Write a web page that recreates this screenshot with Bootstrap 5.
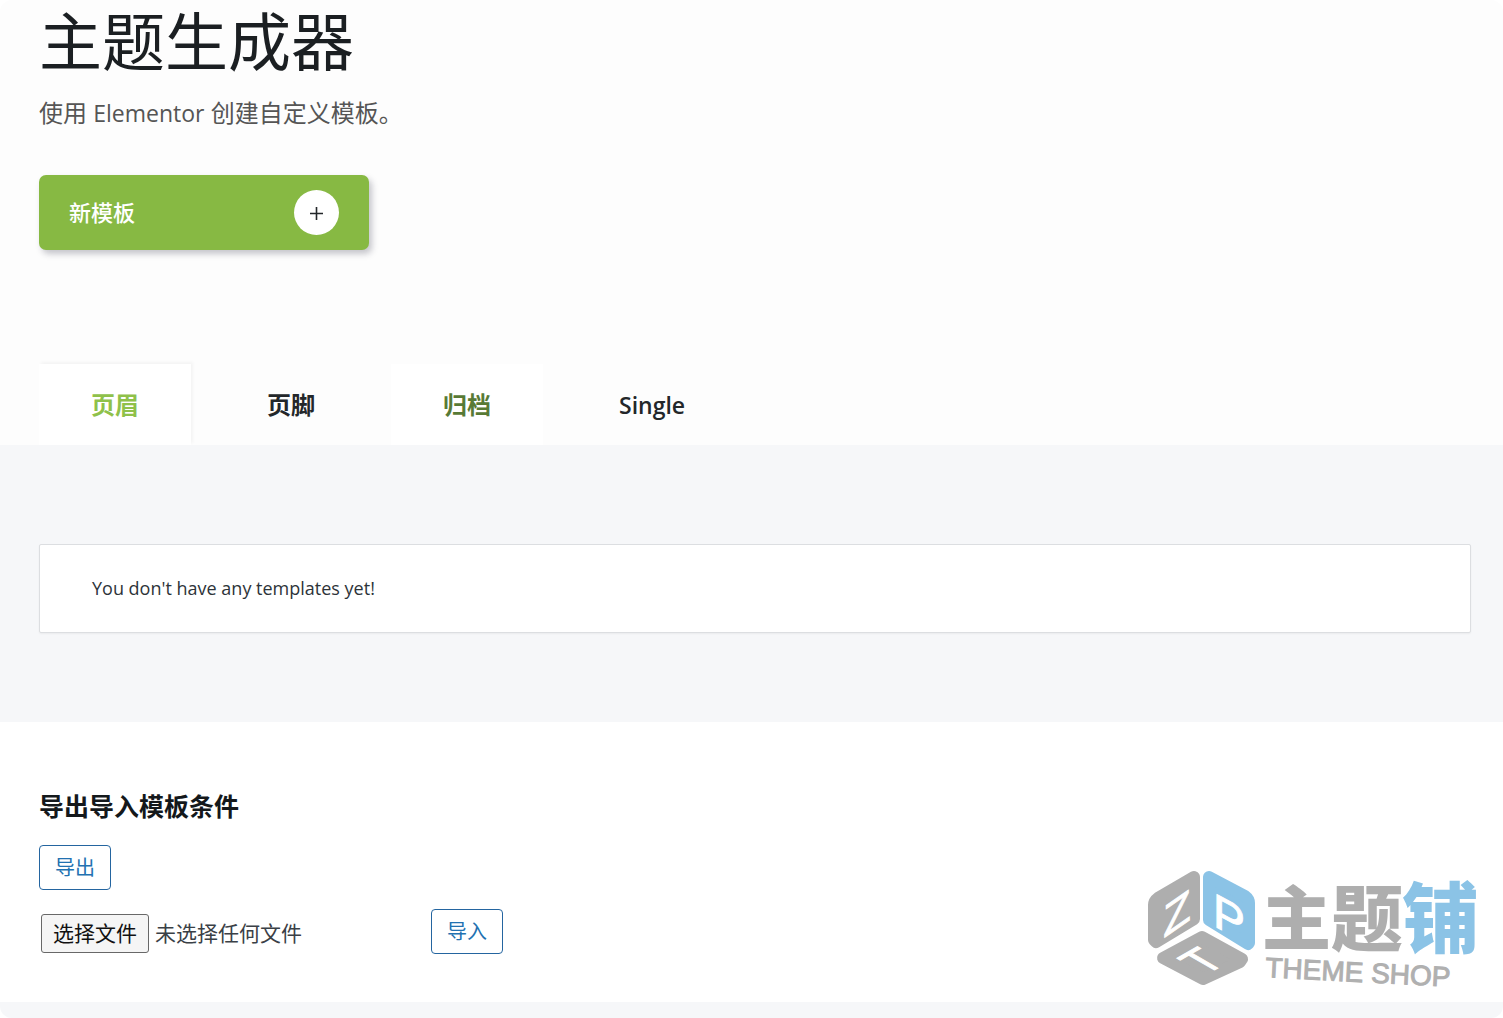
<!DOCTYPE html>
<html lang="zh-CN">
<head>
<meta charset="utf-8">
<meta name="viewport" content="width=device-width, initial-scale=1">
<title>主题生成器</title>
<link href="https://cdn.jsdelivr.net/npm/bootstrap@5.3.0/dist/css/bootstrap.min.css" rel="stylesheet">
<style>
body { font-family: "Open Sans", "Noto Sans CJK SC", sans-serif; background: #fff; color: #23282d; }
.builder-page { background: #fdfdfd; border-radius: 12px; overflow: hidden; }
.gutter { padding-left: 39px; padding-right: 32px; }
.page-title { font-size: 63px; line-height: 82px; color: #1b1f22; font-weight: 400; }
.page-intro { font-size: 24px; line-height: 36px; margin-top: 13px; color: #555; }
.page-intro span { font-size: 23px; }
.new-template { width: 330px; height: 75px; margin-top: 44px; padding: 0 30px; font-size: 22px; font-weight: 500; color: #fff; background: #87b943; border: 0; border-radius: 7px; box-shadow: 3px 4px 6px rgba(40,40,60,.26); }
.new-template:hover { color: #fff; background: #7aab38; }
.plus-disc { width: 45px; height: 45px; padding-top: 2px; background: #fff; }
.type-tabs { margin-top: 114px; gap: 24px; }
.type-tabs a { padding: 22px 52px; line-height: 37px; font-size: 24px; font-weight: 700; color: #23272a; text-decoration: none; }
.type-tabs .latin-tab { padding-top: 23px; padding-bottom: 21px; font-size: 23px; font-weight: 600; }
.type-tabs .current { color: #8fc14a; background: #fff; box-shadow: 2px -2px 3px rgba(0,0,0,.04); }
.type-tabs .hovered { color: #587a35; background: #fff; }
.templates-band { background: #f6f7f9; padding-top: 99px; padding-bottom: 89px; }
.empty-notice { padding: 29px 52px; font-size: 18px; line-height: 29px; color: #2d3339; background: #fff; border: 1px solid #dcdee1; border-radius: 2px; box-shadow: 0 1px 2px rgba(0,0,0,.05); }
.conditions { background: #fff; padding: 66px 23px 12px 39px; }
.conditions h2 { font-size: 25px; line-height: 36px; margin-bottom: 21px; font-weight: 700; color: #14181b; }
.condition-tools { padding-bottom: 36px; }
.line-button { height: 45px; padding: 0 15px; font-size: 20px; line-height: 43px; color: #2271b1; background: #fff; border: 1px solid #2465a0; border-radius: 4px; }
.line-button:hover { color: #0a4b78; border-color: #0a4b78; background: #f6f7f7; }
.import-form { width: 464px; margin-top: 19px; }
.file-picker { font-size: 21px; gap: 6px; margin: 5px 0 0 2px; cursor: pointer; color: #3a4046; }
.picker-button { height: 39px; padding: 0 11px; line-height: 37px; border: 1px solid #686868; border-radius: 3px; background: #f5f5f5; color: #111; }
.site-mark { width: 334px; height: 126px; }
.page-end { height: 16px; background: #f6f7f9; }
</style>
<script src="https://cdn.jsdelivr.net/npm/bootstrap@5.3.0/dist/js/bootstrap.bundle.min.js"></script>
</head>
<body>
<div class="builder-page">
  <header class="gutter">
    <h1 class="page-title mb-0">主题生成器</h1>
    <p class="page-intro mb-0">使用 <span>Elementor</span> 创建自定义模板。</p>
    <button type="button" class="new-template btn d-flex align-items-center justify-content-between">
      新模板
      <span class="plus-disc rounded-circle d-flex align-items-center justify-content-center">
        <svg width="13" height="13" viewBox="0 0 13 13" aria-hidden="true"><path d="M6.5 0v13M0 6.5h13" stroke="#23272a" stroke-width="1.6"/></svg>
      </span>
    </button>
    <nav class="type-tabs d-flex" aria-label="模板类型">
      <a href="#" class="current" aria-current="page">页眉</a>
      <a href="#">页脚</a>
      <a href="#" class="hovered">归档</a>
      <a href="#" class="latin-tab">Single</a>
    </nav>
  </header>

  <main>
    <section class="templates-band gutter">
      <div class="empty-notice">You don't have any templates yet!</div>
    </section>

    <section class="conditions d-flex justify-content-between align-items-end">
      <div class="condition-tools">
        <h2>导出导入模板条件</h2>
        <button type="button" class="line-button btn d-block">导出</button>
        <form class="import-form d-flex justify-content-between align-items-start">
          <input type="file" id="conditionsFile" class="visually-hidden">
          <label for="conditionsFile" class="file-picker d-flex align-items-center">
            <span class="picker-button">选择文件</span><span>未选择任何文件</span>
          </label>
          <button type="button" class="line-button btn">导入</button>
        </form>
      </div>
      <svg class="site-mark" viewBox="1146 864 334 126" role="img" aria-label="主题铺 THEME SHOP">
        <g stroke-linejoin="round" stroke-width="12">
          <path d="M1194 877L1194 919L1156 942L1154 940V905Q1154 901 1158 898Z" fill="#aeaeae" stroke="#aeaeae"/>
          <path d="M1209 877L1245 896Q1249 899 1249 903V943L1248 944L1209 920Z" fill="#8bc3e6" stroke="#8bc3e6"/>
          <path d="M1202 937L1242 959L1240 962L1203 979L1163 958Z" fill="#aeaeae" stroke="#aeaeae"/>
        </g>
        <g fill="#fff" stroke="#fff" stroke-width="1" font-family="Liberation Sans, sans-serif" text-anchor="middle">
          <text transform="translate(1177 929) skewY(-35)" font-size="45">Z</text>
          <text transform="translate(1229 934) skewY(28)" font-size="48">P</text>
          <text transform="translate(1216 969) rotate(-30) skewX(30)" font-size="42">T</text>
        </g>
        <g font-family="Noto Sans CJK SC, sans-serif" font-weight="900">
          <text x="1262" y="944" font-size="69" fill="#aeaeae">主</text>
          <text x="1331" y="945" font-size="72" fill="#aeaeae">题</text>
          <text x="1402" y="947" font-size="77" fill="#8bc3e6">铺</text>
        </g>
        <text transform="translate(1265 977) rotate(3)" font-family="Liberation Sans, sans-serif" font-size="28" fill="#b0b0b0" stroke="#b0b0b0" stroke-width="1">THEME SHOP</text>
      </svg>
    </section>
  </main>
  <footer class="page-end"></footer>
</div>
</body>
</html>
